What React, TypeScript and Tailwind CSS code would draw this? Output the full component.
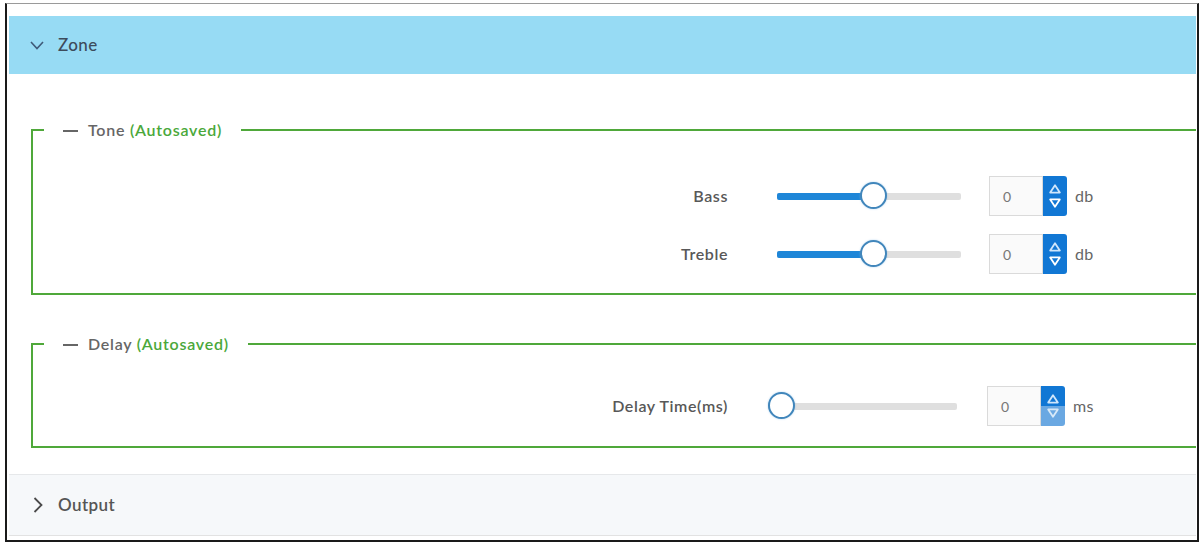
const font = { fontFamily: 'Lato, "Open Sans", sans-serif' };

function Spinner({ downDisabled }: { downDisabled?: boolean }) {
  return (
    <div className="w-[24px] h-[40px] rounded-r-[3px] overflow-hidden flex flex-col">
      <div className="flex-1 bg-[#1177d4] flex items-end justify-center pb-[2px]">
        <svg width="12" height="10" viewBox="0 0 12 10">
          <path d="M6 1.2 L10.8 8.6 L1.2 8.6 Z" fill="none" stroke="#cfe6fb" strokeWidth="1.8" strokeLinejoin="round" />
        </svg>
      </div>
      <div className={`flex-1 flex items-start justify-center pt-[2px] ${downDisabled ? 'bg-[#6aa8e2]' : 'bg-[#1177d4]'}`}>
        <svg width="12" height="10" viewBox="0 0 12 10">
          <path d="M1.2 1.4 L10.8 1.4 L6 8.8 Z" fill="none" stroke={downDisabled ? '#d7e9f8' : '#ffffff'} strokeWidth="1.8" strokeLinejoin="round" />
        </svg>
      </div>
    </div>
  );
}

function Slider({ width, thumbLeft }: { width: number; thumbLeft: number }) {
  return (
    <div className="relative h-[28px] flex items-center" style={{ width }}>
      <div className="w-full h-[7px] bg-[#dfdfdf] rounded-[2px]" />
      {thumbLeft > 0 && (
        <div className="absolute left-0 h-[7px] bg-[#1e86d8] rounded-l-[2px]" style={{ width: thumbLeft + 4 }} />
      )}
      <div
        className="absolute top-[0px] w-[27px] h-[27px] rounded-full border-[2.5px] border-[#4186bb] bg-white shadow-[0_0_2px_rgba(120,180,230,0.6)]"
        style={{ left: thumbLeft }}
      />
    </div>
  );
}

interface RowProps {
  label: string;
  unit: string;
  sliderClass: string;
  inputClass: string;
  sliderWidth: number;
  thumbLeft: number;
  downDisabled?: boolean;
}

function Row({ label, unit, sliderClass, inputClass, sliderWidth, thumbLeft, downDisabled }: RowProps) {
  return (
    <div className="flex items-center h-[40px]">
      <div className="w-[684px] text-right text-[16px] tracking-[0.6px] font-semibold text-[#585858]">{label}</div>
      <div className={sliderClass}>
        <Slider width={sliderWidth} thumbLeft={thumbLeft} />
      </div>
      <div className={`${inputClass} flex items-center`}>
        <div className="w-[54px] h-[40px] border border-[#dadada] bg-[#fafafa] flex items-center pl-[13px] text-[14px] text-[#777]">
          0
        </div>
        <Spinner downDisabled={downDisabled} />
        <span className="ml-[8px] text-[16px] tracking-[0.4px] text-[#666]">{unit}</span>
      </div>
    </div>
  );
}

function Group({ title, children, className }: { title: string; children: React.ReactNode; className?: string }) {
  return (
    <fieldset className={`ml-[22px] border-2 border-r-0 border-[#4fa83a] pl-[11px] ${className ?? ''}`}>
      <legend className="px-[19px] h-[20px] leading-[20px] text-[16px] tracking-[0.75px] font-semibold text-[#666]">
        <span className="inline-block align-middle w-[15px] h-[2px] bg-[#666] mr-[10px] mb-[2px]" />
        {title} <span className="text-[#4aa83a]">(Autosaved)</span>
      </legend>
      {children}
    </fieldset>
  );
}

export default function App() {
  return (
    <div className="w-[1204px] h-[548px] bg-white pt-[3px] pl-[5px]" style={font}>
      <div className="w-[1194px] h-[539px] border-t border-t-[#9a9a9a] border-l-2 border-r-2 border-b-2 border-[#1a1a1a] pl-[2px] pr-[1px] pt-[12px] flex flex-col">
        {/* Zone header */}
        <div className="h-[58px] bg-[#97dbf4] flex items-center pl-[21px]">
          <svg width="14" height="9" viewBox="0 0 14 9" className="mt-[1px]">
            <polyline points="1,1 7,7.5 13,1" fill="none" stroke="#3f5a78" strokeWidth="1.6" />
          </svg>
          <span className="ml-[14px] text-[17px] tracking-[0.4px] font-medium text-[#3d4b5b]">Zone</span>
        </div>

        <div className="pt-[46px]">
          <Group title="Tone">
            <div className="pt-[36px] pb-[19px] flex flex-col gap-[18px]">
              <Row label="Bass" unit="db" sliderClass="ml-[49px]" inputClass="ml-[28px]" sliderWidth={184} thumbLeft={83} />
              <Row label="Treble" unit="db" sliderClass="ml-[49px]" inputClass="ml-[28px]" sliderWidth={184} thumbLeft={83} />
            </div>
          </Group>

          <Group title="Delay" className="mt-[39px]">
            <div className="pt-[32px] pb-[20px]">
              <Row
                label="Delay Time(ms)"
                unit="ms"
                sliderClass="ml-[40px]"
                inputClass="ml-[30px]"
                sliderWidth={189}
                thumbLeft={0}
                downDisabled
              />
            </div>
          </Group>
        </div>

        {/* Output */}
        <div className="mt-[26px] h-[62px] bg-[#f6f8fa] border-t border-[#e6e8ea] border-b border-b-[#e2e2e2] flex items-center pl-[24px]">
          <svg width="10" height="16" viewBox="0 0 10 16">
            <polyline points="1.5,1 8.5,8 1.5,15" fill="none" stroke="#4a4a4a" strokeWidth="1.8" />
          </svg>
          <span className="ml-[15px] text-[17px] tracking-[0.4px] font-semibold text-[#555]">Output</span>
        </div>
      </div>
    </div>
  );
}
